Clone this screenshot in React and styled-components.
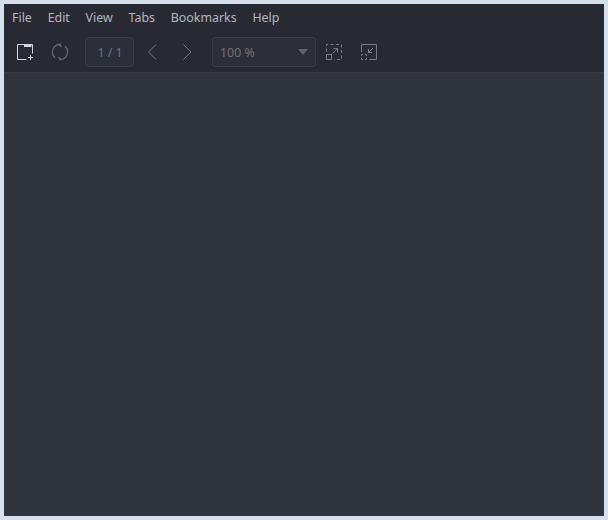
import React from "react";
import styled, { createGlobalStyle } from "styled-components";

const GlobalStyle = createGlobalStyle`
  html, body {
    margin: 0;
    padding: 0;
    background: #d7dfea;
  }
`;

const Page = styled.div`
  width: 608px;
  height: 520px;
  padding: 4px;
  box-sizing: border-box;
  font-family: "Noto Sans", sans-serif;
`;

const Window = styled.div`
  height: 100%;
  display: flex;
  flex-direction: column;
  background: #30343c;
`;

const Header = styled.div`
  background: #272a33;
  border-bottom: 1px solid #373a44;
`;

const MenuBar = styled.div`
  height: 28px;
  display: flex;
  align-items: center;
  padding: 0 8px 1px;
  box-sizing: border-box;
  gap: 15.8px;
`;

const MenuItem = styled.span`
  font-size: 12.4px;
  color: #b4b7be;
`;

const Toolbar = styled.div`
  height: 40px;
  display: flex;
  align-items: center;
  padding-left: 12px;
`;

const ToolIcon = styled.svg`
  width: 18px;
  height: 18px;
  flex: none;
  margin-left: ${(p) => p.$left || 0}px;
  fill: none;
  stroke: ${(p) => p.$color || "#797c83"};
  stroke-width: 1;
`;

const Field = styled.div`
  height: 30px;
  box-sizing: border-box;
  background: #2c2f38;
  border: 1px solid #393c46;
  border-radius: 3px;
  font-size: 12.4px;
  color: #6d7178;
  display: flex;
  align-items: center;
`;

const PageField = styled(Field)`
  width: 49px;
  margin-left: 16px;
  padding-left: 1px;
  justify-content: center;
`;

const ZoomField = styled(Field)`
  width: 104px;
  margin-left: 16px;
  padding: 0 7px;
  justify-content: space-between;
`;

const Caret = styled.span`
  width: 0;
  height: 0;
  border-left: 5px solid transparent;
  border-right: 5px solid transparent;
  border-top: 6px solid #5f626a;
`;

const Canvas = styled.div`
  flex: 1;
  background: #30343c;
`;

const menus = ["File", "Edit", "View", "Tabs", "Bookmarks", "Help"];

export default function App() {
  return (
    <>
      <GlobalStyle />
      <Page>
        <Window>
          <Header>
            <MenuBar>
              {menus.map((m) => (
                <MenuItem key={m}>{m}</MenuItem>
              ))}
            </MenuBar>
            <Toolbar>
              <ToolIcon viewBox="0 0 18 18" $color="#d5d8de">
                <path d="M10.5 16.5H1.5V1.5H16.5V10.5" />
                <rect x="8" y="1" width="7.5" height="3" fill="#d5d8de" stroke="none" />
                <path d="M14.5 12V17M12 14.5H17" />
              </ToolIcon>
              <ToolIcon viewBox="0 0 18 18" $left={17} $color="#64676f">
                <path d="M10 1.6A7.5 7.5 0 0 0 4.2 14.8" strokeWidth="1.3" />
                <path d="M8 16.4A7.5 7.5 0 0 0 13.8 3.2" strokeWidth="1.3" />
                <path d="M7.5 0.8L10.5 4" strokeWidth="1.3" />
                <path d="M10.5 17.2L7.5 14" strokeWidth="1.3" />
              </ToolIcon>
              <PageField>1 / 1</PageField>
              <ToolIcon viewBox="0 0 18 18" $left={9}>
                <path d="M13 1.5L5.5 9L13 16.5" />
              </ToolIcon>
              <ToolIcon viewBox="0 0 18 18" $left={17}>
                <path d="M5.5 1.5L13 9L5.5 16.5" />
              </ToolIcon>
              <ZoomField>
                100 %
                <Caret />
              </ZoomField>
              <ToolIcon viewBox="0 0 18 18" $left={9} $color="#777a82">
                <path d="M1.5 8.5V1.5H16.5V16.5H9" strokeDasharray="3 2.5" />
                <rect x="1.5" y="11.5" width="5" height="5" />
                <path d="M7.5 10.5L12.5 5.5M8.5 5.5H12.5V9.5" />
              </ToolIcon>
              <ToolIcon viewBox="0 0 18 18" $left={17} $color="#777a82">
                <path d="M1.5 9V1.5H16.5V16.5H9" />
                <path d="M1.5 13V11.5H3M5 11.5H6.5V13M6.5 15V16.5H5M3 16.5H1.5V15" />
                <path d="M13 5L8 10M8.5 6V9.5H12" />
              </ToolIcon>
            </Toolbar>
          </Header>
          <Canvas />
        </Window>
      </Page>
    </>
  );
}
